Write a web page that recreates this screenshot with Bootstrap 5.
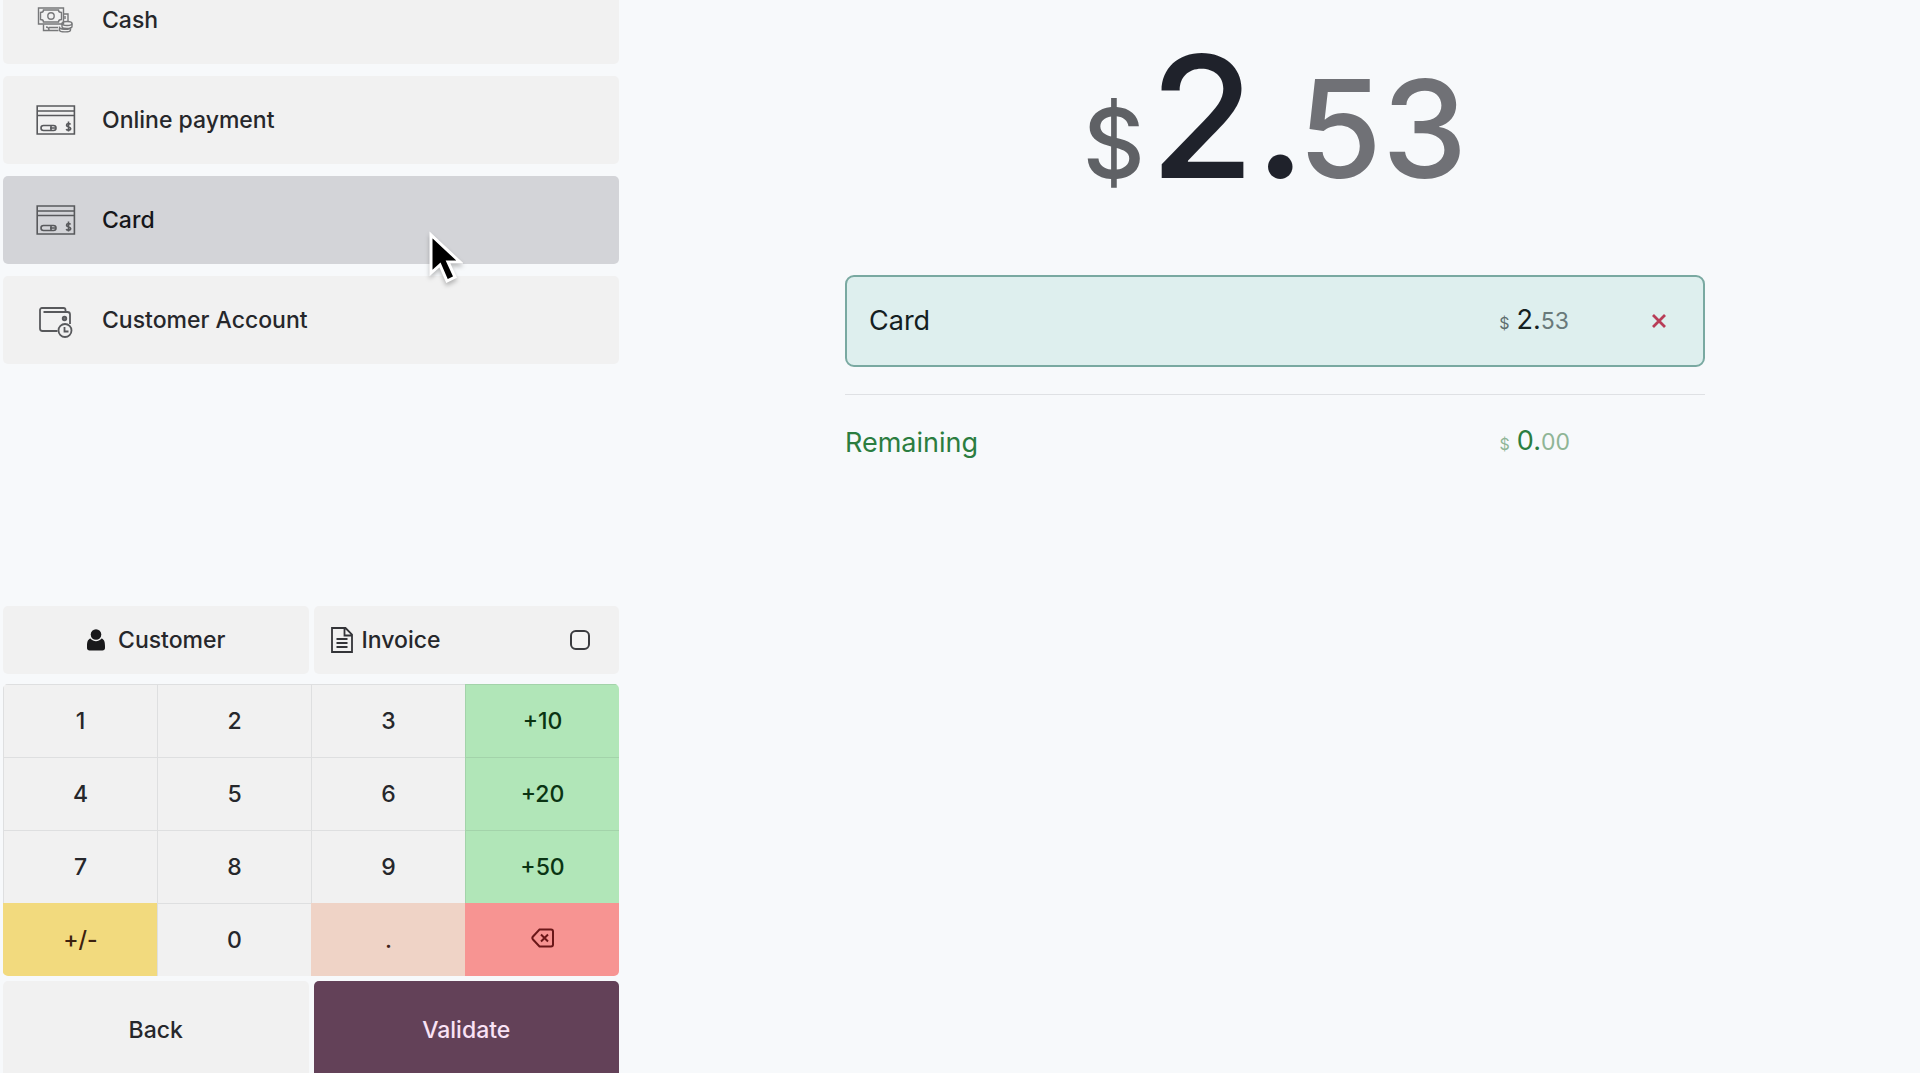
<!DOCTYPE html>
<html lang="en">
<head>
<meta charset="utf-8">
<meta name="viewport" content="width=device-width, initial-scale=1">
<title>Point of Sale - Payment</title>
<link href="https://cdn.jsdelivr.net/npm/bootstrap@5.3.0/dist/css/bootstrap.min.css" rel="stylesheet">
<style>
body { background: #f7f9fb; color: #26272b; font-family: Inter, "Liberation Sans", sans-serif; font-size: 23px; line-height: 32px; }
.pos-screen { display: grid; grid-template-columns: 31fr 65fr; height: 100vh; overflow: hidden; }
.pos-left { min-width: 0; padding: 0 1px 0 3px; }
/* the left pane is scrolled a little inside the window */
.method-list { gap: 12px; margin-top: -24px; }
.pos-btn { background: #f1f1f1; border: 0; border-radius: 5px; color: #26272b; font-weight: 500; padding: 0; }
.method-btn { display: flex; align-items: center; height: 88px; padding-left: 33px; gap: 26px; text-align: left; }
.method-btn svg { width: 40px; height: 40px; flex: none; }
.method-btn.selected { background: #d3d4d8; color: #15161a; }
.pos-footer { margin-bottom: -5px; }
.split-row { display: grid; grid-template-columns: 1fr 1fr; gap: 5px; }
.tool-btn { height: 68px; }
.numpad { display: grid; grid-template-columns: repeat(4, 1fr); grid-auto-rows: 73px; border-radius: 5px; overflow: hidden; margin: 10px 0 5px; }
.numpad .pos-btn { border-radius: 0; border: solid #dedfe0; border-width: 1px 0 0 1px; }
.numpad .key-plus { background: #b1e6b8; color: #0a3413; border-color: #a3d3aa; }
.numpad .key-sign { background: #f2da7e; color: #3c210f; border-color: #f2da7e; }
.numpad .key-dot { background: #efd3c6; color: #40231b; border-color: #efd3c6; }
.numpad .key-del { background: #f79492; color: #6a1718; border-color: #f79492; }
.action-btn { height: 97px; }
.action-main { background: #634158; color: #f9e2f5; }
.invoice-check { width: 20px; height: 20px; border: 2px solid #3a3b3f; border-radius: 5px; background: #f4f4f4; margin: 0 29px 0 auto; }
.pos-right { padding-left: 10px; }
.due-amount { font-size: 170px; font-weight: 500; line-height: 200px; margin-top: 16px; height: 200px; color: #1f222b; }
.due-sign { font-size: 96px; color: #5f6165; margin-right: 5px; }
.due-cents { font-size: 136px; color: #707176; margin-left: -8px; }
.pay-line { height: 92px; border: 2px solid #79a9a1; border-radius: 9px; background: #deefee; padding: 0 34px 0 22px; margin-top: 59px; color: #14201f; }
.pay-text { font-size: 27px; line-height: 40px; }
.pay-sum { display: flex; align-items: baseline; }
.sum-sign { font-size: 16px; margin-right: 7px; color: #5e6e6e; }
.sum-cents { font-size: 23px; color: #69797a; }
.del-btn { width: 20px; height: 40px; border: 0; background: none; padding: 0; margin-left: 80px; display: flex; align-items: center; justify-content: center; }
.rule { border-top: 1px solid #dfe1e4; margin-top: 27px; }
.remain-line { margin-top: 26px; padding-right: 135px; color: #2b7d40; }
.remain-line .sum-sign, .remain-line .sum-cents { color: #8fb596; }
.pointer { position: absolute; left: 427px; top: 231px; filter: drop-shadow(0 3px 2px rgba(0,0,0,.25)); pointer-events: none; }
</style>
<script src="https://cdn.jsdelivr.net/npm/bootstrap@5.3.0/dist/js/bootstrap.bundle.min.js"></script>
</head>
<body>
<svg width="0" height="0" class="position-absolute" aria-hidden="true">
  <symbol id="ic-card" viewBox="0 0 40 40">
    <g fill="none" stroke="#58595c" stroke-width="1.6">
      <path d="M1.2 6h37.2v28H1.2zM1.2 11h37.2M1.2 15.500h37.2"/>
      <rect x="5" y="25.500" width="15" height="5" rx="2.500"/>
      <path d="M14 28h5M15 26v4" />
      <path d="M34.500 24.500c-.6-1.200-4-1.500-4 .7 0 2.200 4.200 1.200 4.200 3.400 0 2.100-3.800 2-4.500.5M32.500 21.500v10"/>
    </g>
  </symbol>
</svg>
<main class="pos-screen">
  <section class="pos-left d-flex flex-column">
    <div class="method-list d-flex flex-column">
      <button type="button" class="pos-btn method-btn">
        <svg viewBox="0 0 40 40" fill="none" stroke="#77787a" stroke-width="1.400">
          <path d="M2.500 8h25v16h-25z"/>
          <path d="M4.500 12.500c2 0 3-1 3-2.500h15c0 1.500 1 2.500 3 2.500v7c-2 0-3 1-3 2.500h-15c0-1.500-1-2.500-3-2.500z"/>
          <circle cx="15" cy="16" r="3.200"/>
          <path d="M28 14h4v7M7.500 24.500v6h15M10 27c2 0 3 1 3 3M13 27.500h9M29 16v3"/>
          <ellipse cx="31" cy="23.500" rx="5" ry="2"/>
          <path d="M26 23.500v3c0 2.500 10 2.500 10 0v-3M23.500 26.500c-1.500 3 10 4 11 1M23.500 27v3c0 2.500 11 2.500 11 0v-3"/>
        </svg>
        <span>Cash</span>
      </button>
      <button type="button" class="pos-btn method-btn"><svg><use href="#ic-card"/></svg><span>Online payment</span></button>
      <button type="button" class="pos-btn method-btn selected"><svg><use href="#ic-card"/></svg><span>Card</span></button>
      <button type="button" class="pos-btn method-btn">
        <svg viewBox="0 0 40 40" fill="none" stroke="#58595c" stroke-width="1.800">
          <path d="M21.500 31H6.500c-1.500 0-2.500-1-2.500-2.500V10c0-1.200.8-2 2-2h21.500c1.200 0 2 .8 2 2v2M7.500 12h24c1.500 0 2.500 1 2.500 2.500V24"/>
          <circle cx="28.500" cy="18.500" r="1.800" fill="#77787a"/>
          <circle cx="29" cy="30.500" r="6.500"/>
          <path d="M28.500 27v4.500h4"/>
        </svg>
        <span>Customer Account</span>
      </button>
    </div>

    <div class="pos-footer mt-auto">
      <div class="split-row">
        <button type="button" class="pos-btn tool-btn d-flex align-items-center justify-content-center">
          <svg width="20" height="24" viewBox="0 0 20 24" fill="#19191b" class="me-2"><circle cx="10" cy="6.500" r="5.300"/><path d="M4.500 10.500c-2.500.8-3.500 3-3.500 7.500v2c0 1.500 1 2.500 2.500 2.500h13c1.500 0 2.500-1 2.500-2.500v-2c0-4.500-1-6.700-3.500-7.500-1.500 2-3.500 2.700-5.500 2.700s-4-.7-5.500-2.700z"/></svg>
          <span class="ms-1">Customer</span>
        </button>
        <label class="pos-btn tool-btn d-flex align-items-center" for="invoice">
          <svg width="24" height="26" viewBox="0 0 24 26" fill="none" stroke="#333438" stroke-width="1.800" class="ms-3 me-2"><path d="M2 1h13.500L22 7.500V25H2zM14.500 1v7.500H22M6.500 12h11M6.500 16h11M6.500 20h11"/></svg>
          <span>Invoice</span>
          <input class="invoice-check form-check-input" type="checkbox" id="invoice">
        </label>
      </div>
      <div class="numpad">
        <button type="button" class="pos-btn">1</button>
        <button type="button" class="pos-btn">2</button>
        <button type="button" class="pos-btn">3</button>
        <button type="button" class="pos-btn key-plus">+10</button>
        <button type="button" class="pos-btn">4</button>
        <button type="button" class="pos-btn">5</button>
        <button type="button" class="pos-btn">6</button>
        <button type="button" class="pos-btn key-plus">+20</button>
        <button type="button" class="pos-btn">7</button>
        <button type="button" class="pos-btn">8</button>
        <button type="button" class="pos-btn">9</button>
        <button type="button" class="pos-btn key-plus">+50</button>
        <button type="button" class="pos-btn key-sign">+/-</button>
        <button type="button" class="pos-btn">0</button>
        <button type="button" class="pos-btn key-dot">.</button>
        <button type="button" class="pos-btn key-del" aria-label="Backspace">
          <svg width="24" height="20" viewBox="0 0 24 20" fill="none" stroke="#6a1718" stroke-width="2" class="align-baseline"><path d="M8.500 1.500H20c1.200 0 2 .8 2 2v13c0 1.200-.8 2-2 2H8.500L2 11.500c-.8-.9-.8-2.100 0-3zM10 6.500l7 7M17 6.500l-7 7"/></svg>
        </button>
      </div>
      <div class="split-row">
        <button type="button" class="pos-btn action-btn">Back</button>
        <button type="button" class="pos-btn action-btn action-main">Validate</button>
      </div>
    </div>
  </section>

  <section class="pos-right">
    <div class="row g-0 justify-content-center">
      <div class="col-8">
        <div class="due-amount text-center text-nowrap"><span class="due-sign">$</span><span>2.</span><span class="due-cents">53</span></div>
        <div class="pay-line pay-text d-flex align-items-center">
          <span class="me-auto">Card</span>
          <span class="pay-sum"><span class="sum-sign">$</span>2.<span class="sum-cents">53</span></span>
          <button type="button" class="del-btn" aria-label="Remove payment"><svg width="16" height="16" viewBox="0 0 16 16" stroke="#b83d57" stroke-width="2.800"><path d="M2 2l12 12M14 2L2 14"/></svg></button>
        </div>
        <div class="rule"></div>
        <div class="remain-line pay-text d-flex align-items-center">
          <span class="me-auto">Remaining</span>
          <span class="pay-sum"><span class="sum-sign">$</span>0.<span class="sum-cents">00</span></span>
        </div>
      </div>
    </div>
  </section>
</main>
<svg class="pointer" width="36" height="56" viewBox="0 0 36 56" aria-hidden="true"><path d="M4 4v38l9-8 7 16 8-4-7-15h12z" fill="#000" stroke="#fff" stroke-width="3"/></svg>
</body>
</html>
